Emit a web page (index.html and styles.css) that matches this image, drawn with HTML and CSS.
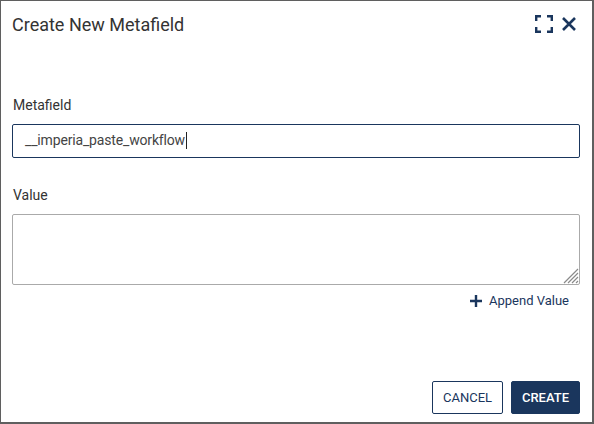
FILE: index.html
```html
<!DOCTYPE html>
<html lang="en">
<head>
  <meta charset="UTF-8" />
  <title>Create New Metafield</title>
  <link rel="stylesheet" href="styles.css">
</head>
<body>
  <div class="dialog">
    <div class="dialog-header">
      <h1>Create New Metafield</h1>
      <div class="header-icons">
        <svg class="icon-expand" width="18" height="18" viewBox="0 0 18 18" fill="none" stroke="#1a365d" stroke-width="2.4">
          <path d="M6 1.2H1.2V6M12 1.2H16.8V6M1.2 12V16.8H6M16.8 12V16.8H12"/>
        </svg>
        <svg class="icon-close" width="14" height="14" viewBox="0 0 14 14" fill="none" stroke="#1a365d" stroke-width="2.6">
          <path d="M1 1L13 13M13 1L1 13"/>
        </svg>
      </div>
    </div>

    <div class="dialog-body">
      <label class="field-label">Metafield</label>
      <div class="text-input">__imperia_paste_workflow<span class="caret"></span></div>

      <label class="field-label value-label">Value</label>
      <div class="text-area">
        <svg class="resizer" width="16" height="16" viewBox="0 0 16 16" stroke="#8a8a8a" stroke-width="1.2">
          <path d="M1 15L15 1M5 15L15 5M9 15L15 9M13 15L15 13"/>
        </svg>
      </div>

      <div class="append-row">
        <svg width="12" height="12" viewBox="0 0 12 12" stroke="#1a365d" stroke-width="2.4">
          <path d="M6 0V12M0 6H12"/>
        </svg>
        <span>Append Value</span>
      </div>
    </div>

    <div class="dialog-footer">
      <button class="btn btn-outline">CANCEL</button>
      <button class="btn btn-solid">CREATE</button>
    </div>
  </div>
</body>
</html>
```

FILE: styles.css
```css
* {
  box-sizing: border-box;
}

html, body {
  margin: 0;
  padding: 0;
  height: 100%;
  background: #fff;
}

body {
  font-family: Roboto, "Liberation Sans", sans-serif;
  color: #333;
}

.dialog {
  width: 594px;
  height: 424px;
  border: 1px solid #5f5f5f;
  border-width: 1px 2px 2px 1px;
  display: flex;
  flex-direction: column;
  background: #fff;
}

.dialog-header {
  display: flex;
  justify-content: space-between;
  align-items: center;
  height: 46px;
  padding: 0 16px 0 11px;
}

.dialog-header h1 {
  margin: 0;
  font-size: 18px;
  font-weight: 400;
  color: #333;
}

.header-icons {
  display: flex;
  align-items: center;
  gap: 9px;
}

.dialog-body {
  flex: 1;
  padding: 49px 12px 0 11px;
}

.field-label {
  display: block;
  font-size: 14px;
  line-height: 18px;
  padding-left: 1px;
  margin-bottom: 10px;
  color: #333;
}

.value-label {
  margin-top: 28px;
  margin-bottom: 10px;
}

.text-input {
  height: 34px;
  border: 1px solid #1a365d;
  border-radius: 2px;
  padding: 0 0 2px 12px;
  font-size: 14px;
  letter-spacing: -0.16px;
  line-height: 30px;
  color: #444;
  display: flex;
  align-items: center;
}

.caret {
  width: 1px;
  height: 17px;
  margin-left: 1px;
  background: #222;
}

.text-area {
  height: 71px;
  border: 1px solid #aaa;
  border-radius: 2px;
  display: flex;
  justify-content: flex-end;
  align-items: flex-end;
}

.resizer {
  display: block;
}

.append-row {
  display: flex;
  justify-content: flex-end;
  align-items: center;
  gap: 7px;
  margin-top: 8px;
  padding-right: 11px;
  font-size: 13px;
  line-height: 16px;
  color: #1a365d;
}

.append-row svg {
  margin-bottom: 1px;
}

.dialog-footer {
  display: flex;
  justify-content: flex-end;
  gap: 8px;
  padding: 0 12px 8px 0;
}

.btn {
  height: 33px;
  border-radius: 2px;
  font-family: Roboto, "Liberation Sans", sans-serif;
  font-size: 13px;
  padding: 0;
}

.btn-outline {
  width: 71px;
  background: #fff;
  color: #1a365d;
  border: 1px solid #1a365d;
}

.btn-solid {
  width: 69px;
  background: #1a365d;
  color: #fff;
  border: 1px solid #1a365d;
  font-weight: 500;
}
```
